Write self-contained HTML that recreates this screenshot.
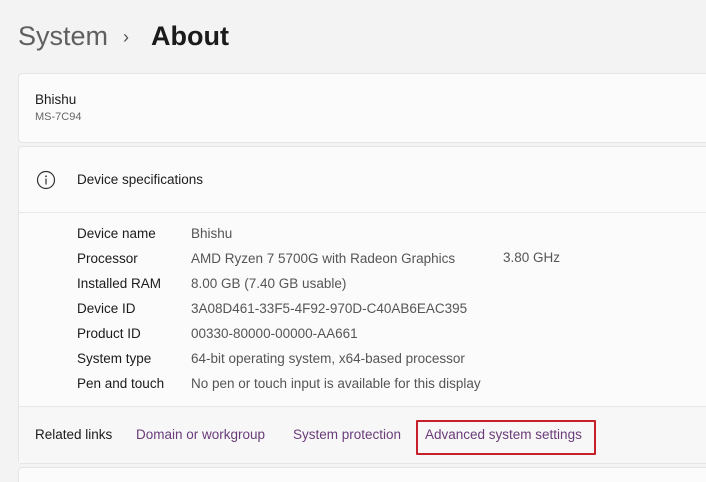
<!DOCTYPE html><html style="overflow:hidden;height:482px"><head><style>
body{margin:0;width:706px;height:482px;background:#f3f3f3;font-family:"Liberation Sans",sans-serif;position:relative;overflow:hidden;color:#1b1b1b}
.a{position:absolute;white-space:nowrap}
.card{position:absolute;left:18px;right:-4px;background:#fbfbfb;border:1px solid #e5e5e5;border-radius:4px}
.r{font-size:13.5px}
</style></head><body>
<div class="a" style="left:18px;top:21px;font-size:27px;color:#5f5f5f">System</div>
<div class="a" style="left:123px;top:27px;font-size:18px;color:#555">›</div>
<div class="a" style="left:151px;top:21px;font-size:27px;font-weight:bold;color:#1b1b1b">About</div>
<div class="card" style="top:73px;height:68px"></div>
<div class="a" style="left:35px;top:92px;font-size:13.5px">Bhishu</div>
<div class="a" style="left:35px;top:111px;font-size:11px;color:#666">MS-7C94</div>
<div class="card" style="top:146px;height:316px"></div>
<div class="a" style="left:19px;top:212px;right:0;height:1px;background:#e8e8e8"></div>
<div class="a" style="left:19px;top:406px;right:0;height:56px;background:#f7f7f7;border-top:1px solid #e8e8e8"></div>
<svg class="a" style="left:36px;top:170px" width="20" height="20"><circle cx="10" cy="10" r="8.5" fill="none" stroke="#333" stroke-width="1.2"/><rect x="9.4" y="8.5" width="1.2" height="6" fill="#333"/><circle cx="10" cy="6.3" r=".9" fill="#333"/></svg>
<div class="a r" style="left:77px;top:172px">Device specifications</div>
<div class="a r" style="left:77px;top:221px;line-height:25px">Device name<br>Processor<br>Installed RAM<br>Device ID<br>Product ID<br>System type<br>Pen and touch</div>
<div class="a r" style="left:191px;top:221px;line-height:25px;color:#555">Bhishu<br>AMD Ryzen 7 5700G with Radeon Graphics<br>8.00 GB (7.40 GB usable)<br>3A08D461-33F5-4F92-970D-C40AB6EAC395<br>00330-80000-00000-AA661<br>64-bit operating system, x64-based processor<br>No pen or touch input is available for this display</div>
<div class="a r" style="left:503px;top:250px;color:#555">3.80 GHz</div>
<div class="a r" style="left:35px;top:427px">Related links</div>
<div class="a r" style="left:136px;top:427px;color:#6a3c7a">Domain or workgroup</div>
<div class="a r" style="left:293px;top:427px;color:#6a3c7a">System protection</div>
<div class="a r" style="left:425px;top:427px;color:#6a3c7a">Advanced system settings</div>
<div class="a" style="left:416px;top:420px;width:176px;height:31px;border:2px solid #c8202a;border-radius:1px"></div>
<div class="card" style="top:467px;height:14px;border-bottom:none;border-radius:4px 4px 0 0"></div>
</body></html>
